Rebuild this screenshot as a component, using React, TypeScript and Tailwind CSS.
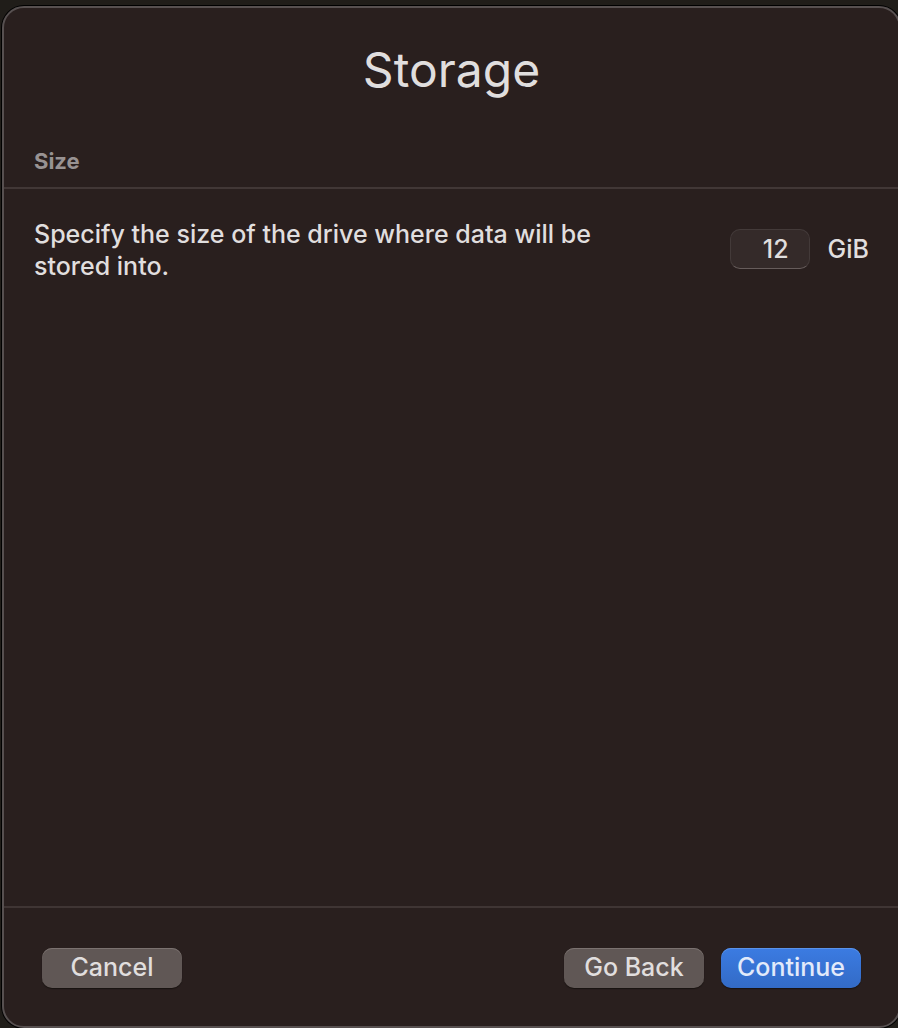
export default function App() {
  return (
    <div className="flex min-h-screen overflow-hidden bg-[#201d19] pt-[6px] pl-[2px] font-['Inter','Liberation_Sans',sans-serif] text-[#e0dede]">
      <main className="-mr-[3px] flex min-w-0 flex-1 flex-col rounded-[22px] border-2 border-[#575050] bg-[#291f1e] shadow-[0_0_0_1px_#000000]">
        <h1 className="pt-8 text-center text-[48px] leading-[60px]">Storage</h1>
        <h2 className="mt-12 border-b-2 border-[#413736] px-[30px] pb-[13px] text-[22px] leading-[26px] font-bold text-[#989292]">Size</h2>
        <section className="flex flex-1 items-start justify-between px-[30px] pt-[29px] text-[25px] leading-8 font-medium">
          <label htmlFor="size" className="max-w-[600px]">Specify the size of the drive where data will be stored into.</label>
          <div className="flex items-center gap-[18px] pt-[11px]">
            <input id="size" defaultValue="12" inputMode="numeric" className="h-10 w-20 rounded-[10px] border border-[#433a39] border-b-[#665c5b] bg-[#342a29] pr-5 text-right" />
            <span>GiB</span>
          </div>
        </section>
        <footer className="flex items-center gap-[17px] border-t-2 border-[#3f3534] px-[38px] pt-10 pb-[38px] text-[25px] leading-8 font-medium">
          <button type="button" className="mr-auto h-10 w-[140px] rounded-[10px] bg-[#605755] pb-[2px] shadow-[inset_0_1px_0_#7b7270,0_1px_1px_#181210]">Cancel</button>
          <button type="button" className="h-10 w-[140px] rounded-[10px] bg-[#605755] pb-[2px] shadow-[inset_0_1px_0_#7b7270,0_1px_1px_#181210]">Go Back</button>
          <button type="button" className="h-10 w-[140px] rounded-[10px] bg-linear-to-b from-[#3b7be2] to-[#336bc6] pb-[2px] text-[#e2eafa] shadow-[inset_0_1px_0_#5a93ea,0_1px_1px_#181210]">Continue</button>
        </footer>
      </main>
    </div>
  );
}
